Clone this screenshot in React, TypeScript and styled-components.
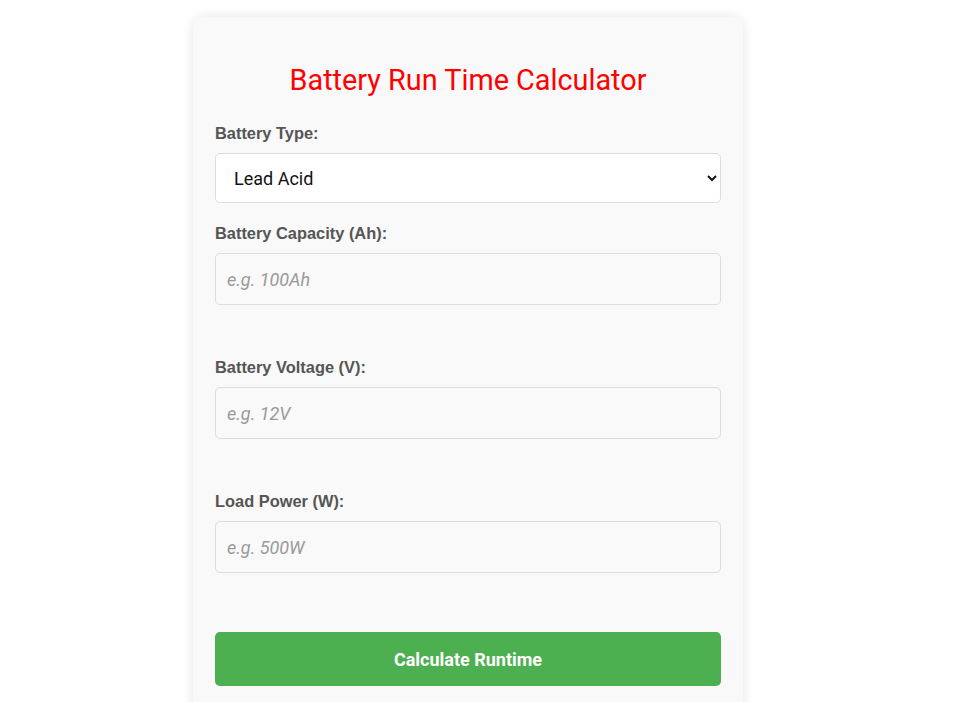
import { createGlobalStyle, styled } from 'styled-components';

const GlobalStyle = createGlobalStyle`
  html, body {
    margin: 0;
    padding: 0;
    background: #ffffff;
  }
  body {
    font-family: Roboto, "Liberation Sans", Arial, sans-serif;
  }
`;

const Page = styled.div`
  padding: 17px 0 0 193px;
`;

const Card = styled.div`
  width: 550px;
  box-sizing: border-box;
  padding: 22px 22px 40px;
  background: #f9f9f9;
  border-radius: 10px;
  box-shadow: 0 0 12px rgba(0, 0, 0, 0.1);
`;

const Title = styled.h2`
  margin: 24px 0 27px;
  text-align: center;
  color: #ff0000;
  font-family: Roboto, "Liberation Sans", sans-serif;
  font-size: 28.8px;
  font-weight: 400;
  line-height: 34px;
`;

const Field = styled.div<{ $gap: number }>`
  display: flex;
  flex-direction: column;
  margin-bottom: ${(p) => p.$gap}px;
`;

const Label = styled.label`
  font-family: "Liberation Sans", Arial, sans-serif;
  font-size: 16.4px;
  font-weight: 700;
  line-height: 18px;
  color: #555555;
  margin-bottom: 11px;
`;

const Select = styled.select`
  height: 50px;
  box-sizing: border-box;
  padding: 0 14px;
  background: #ffffff;
  border: 1px solid #dddddd;
  border-radius: 5px;
  font-family: Roboto, sans-serif;
  font-size: 18px;
  color: #111111;
`;

const Input = styled.input`
  height: 52px;
  box-sizing: border-box;
  padding: 0 11px;
  background: #f9f9f9;
  border: 1px solid #dddddd;
  border-radius: 5px;
  font-family: Roboto, sans-serif;
  font-size: 18px;
  color: #222222;
  &::placeholder {
    color: #999999;
    font-style: italic;
  }
`;

const Button = styled.button`
  width: 100%;
  height: 54px;
  border: none;
  border-radius: 5px;
  background: #4caf50;
  color: #ffffff;
  font-family: Roboto, sans-serif;
  font-size: 18px;
  font-weight: 700;
  cursor: pointer;
`;

const inputs = [
  { label: 'Battery Capacity (Ah):', placeholder: 'e.g. 100Ah' },
  { label: 'Battery Voltage (V):', placeholder: 'e.g. 12V' },
  { label: 'Load Power (W):', placeholder: 'e.g. 500W' },
];

export default function App() {
  return (
    <>
      <GlobalStyle />
      <Page>
        <Card>
          <Title>Battery Run Time Calculator</Title>
          <Field $gap={21}>
            <Label>Battery Type:</Label>
            <Select defaultValue="lead">
              <option value="lead">Lead Acid</option>
              <option value="lithium">Lithium Ion</option>
              <option value="nimh">NiMH</option>
            </Select>
          </Field>
          {inputs.map((f, i) => (
            <Field key={f.label} $gap={i === inputs.length - 1 ? 59 : 53}>
              <Label>{f.label}</Label>
              <Input type="number" placeholder={f.placeholder} />
            </Field>
          ))}
          <Button>Calculate Runtime</Button>
        </Card>
      </Page>
    </>
  );
}
